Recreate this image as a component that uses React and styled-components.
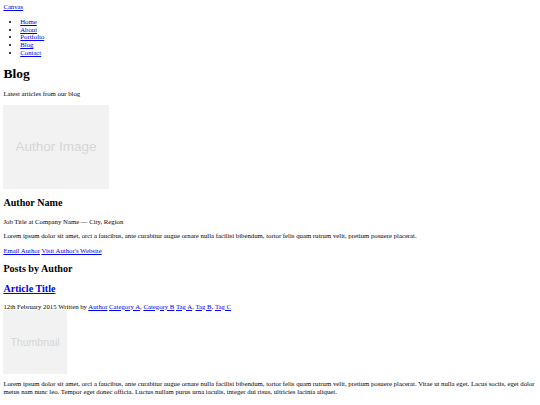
import React from 'react';
import styled, { createGlobalStyle } from 'styled-components';

// Layout is written in 1280px-wide units and scaled down to the 540px window
const SCALE = 540 / 1280;
const u = (n) => `${(n * SCALE).toFixed(3)}px`;

const GlobalStyle = createGlobalStyle`
  html {
    background: #fff;
  }

  body {
    margin: ${u(8)};
    font-family: "Liberation Serif", "Times New Roman", serif;
    font-size: ${u(16)};
    line-height: 1.15;
    color: #000;
  }

  a {
    color: #0000ee;
    text-decoration: underline;
  }
`;

const SiteHeader = styled.header`
  display: block;
`;

const NavList = styled.ul`
  margin: ${u(16)} 0;
  padding-left: ${u(40)};
  list-style: disc;
`;

const PageTitle = styled.h1`
  margin: ${u(21.44)} 0;
  font-size: ${u(32)};
  font-weight: bold;
`;

const Paragraph = styled.p`
  margin: ${u(16)} 0;
`;

const Heading = styled.h2`
  margin: ${u(19.92)} 0;
  font-size: ${u(24)};
  font-weight: bold;
`;

const Placeholder = styled.div`
  display: flex;
  align-items: center;
  justify-content: center;
  width: ${(p) => u(p.$w)};
  height: ${(p) => u(p.$h)};
  background: #f2f2f2;
  color: #d6d6d6;
  font-family: "Liberation Sans", Arial, sans-serif;
  font-size: ${(p) => u(p.$size)};
  line-height: 1;
`;

const PostMeta = styled.div`
  display: block;
`;

const navItems = ['Home', 'About', 'Portfolio', 'Blog', 'Contact'];

const App = () => (
  <>
    <GlobalStyle />
    <SiteHeader>
      <a href="#">Canvas</a>
    </SiteHeader>
    <nav>
      <NavList>
        {navItems.map((item) => (
          <li key={item}>
            <a href="#">{item}</a>
          </li>
        ))}
      </NavList>
    </nav>

    <PageTitle>Blog</PageTitle>
    <Paragraph>Latest articles from our blog</Paragraph>

    <Placeholder $w={250} $h={200} $size={32}>Author Image</Placeholder>
    <Heading>Author Name</Heading>
    <Paragraph>Job Title at Company Name — City, Region</Paragraph>
    <Paragraph>
      Lorem ipsum dolor sit amet, orci a faucibus, ante curabitur augue ornare nulla facilisi
      bibendum, tortor felis quam rutrum velit, pretium posuere placerat.
    </Paragraph>
    <Paragraph>
      <a href="#">Email Author</a> <a href="#">Visit Author's Website</a>
    </Paragraph>

    <Heading>Posts by Author</Heading>
    <article>
      <Heading>
        <a href="#">Article Title</a>
      </Heading>
      <PostMeta>
        12th February 2015 Written by <a href="#">Author</a> <a href="#">Category A</a>,{' '}
        <a href="#">Category B</a> <a href="#">Tag A</a>, <a href="#">Tag B</a>,{' '}
        <a href="#">Tag C</a>
      </PostMeta>
      <Placeholder $w={150} $h={150} $size={25}>Thumbnail</Placeholder>
      <Paragraph>
        Lorem ipsum dolor sit amet, orci a faucibus, ante curabitur augue ornare nulla facilisi
        bibendum, tortor felis quam rutrum velit, pretium posuere placerat. Vitae ut nulla eget.
        Lacus sociis, eget dolor metus nam nunc leo. Tempor eget donec officia. Luctus nullam
        purus urna iaculis, integer dui risus, ultricies lacinia aliquet.
      </Paragraph>
      <Paragraph>
        <a href="#">Read More</a>
      </Paragraph>
    </article>
  </>
);

export default App;
